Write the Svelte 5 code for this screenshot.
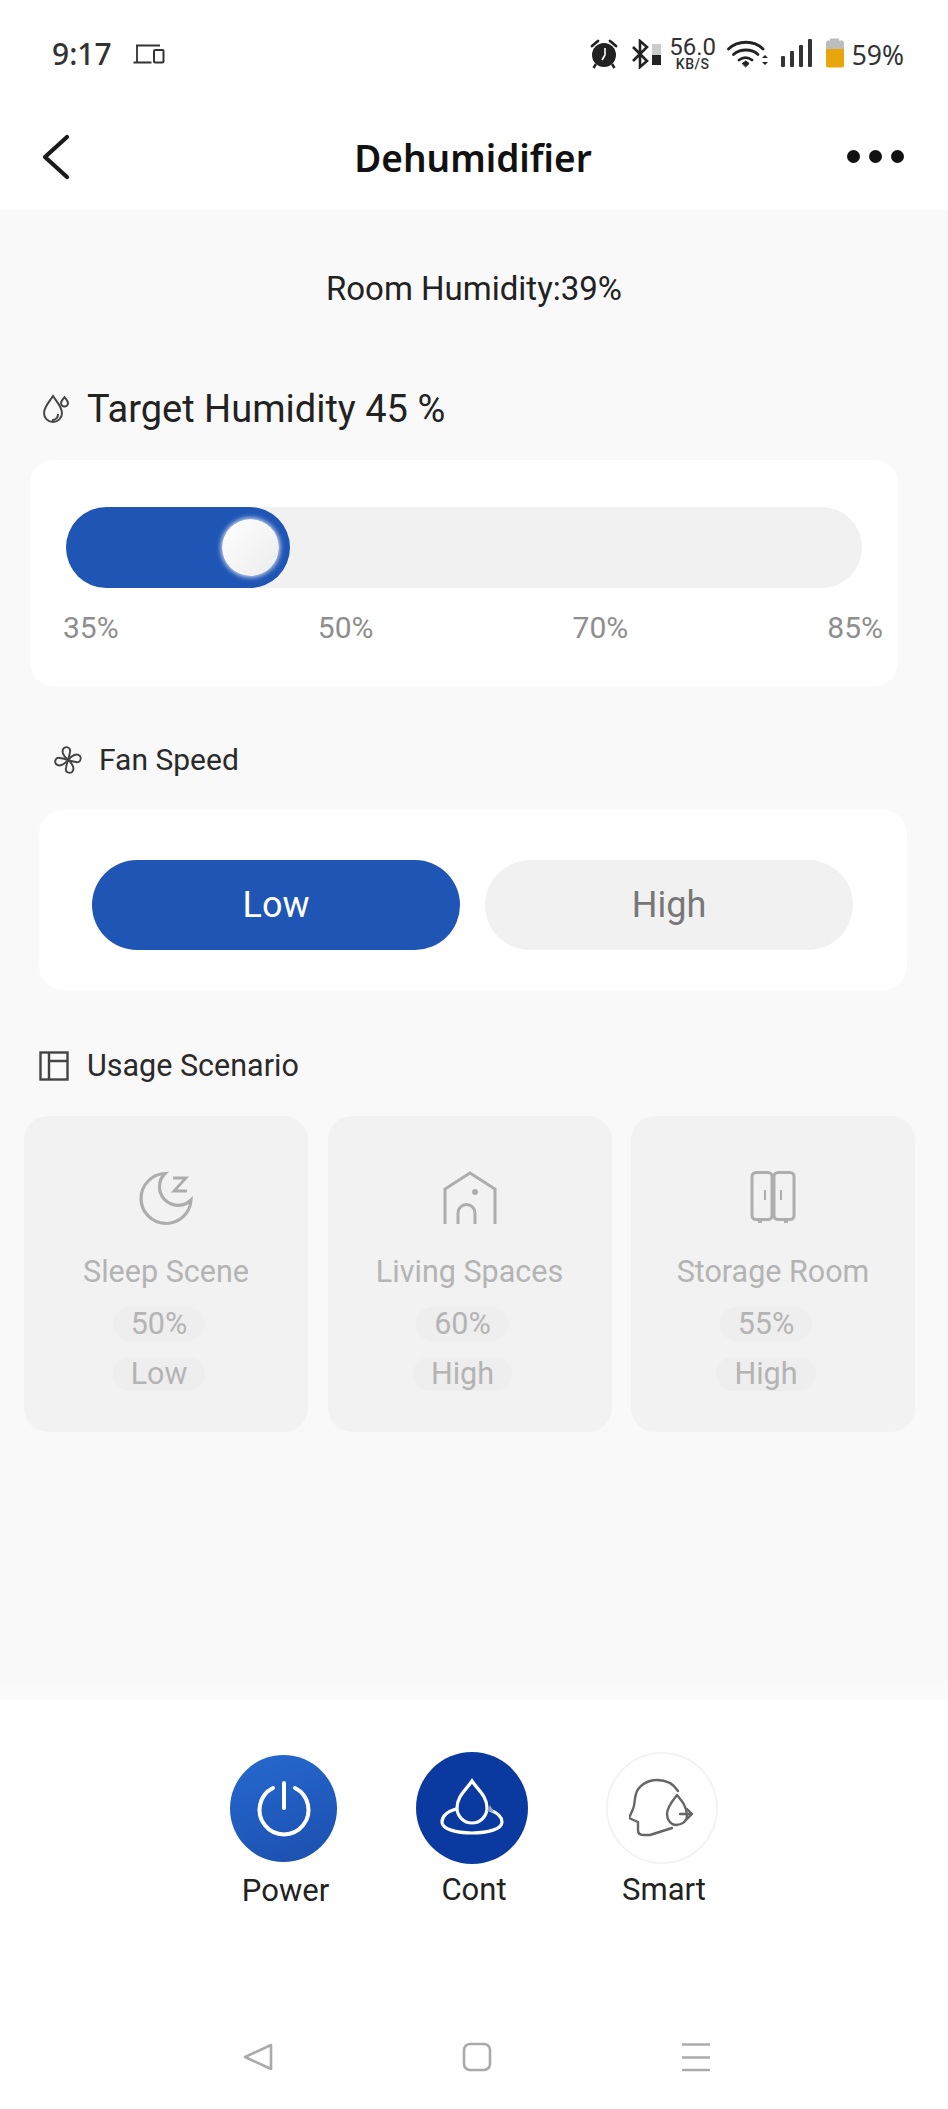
<script>
  const scenes = [
    { name: 'Sleep Scene', pct: '50%', mode: 'Low', icon: 'moon' },
    { name: 'Living Spaces', pct: '60%', mode: 'High', icon: 'house' },
    { name: 'Storage Room', pct: '55%', mode: 'High', icon: 'closet' }
  ];
</script>

<div class="page">
  <header class="top">
    <div class="status">
      <span class="time">9:17</span>
      <svg class="devices" width="32" height="20" viewBox="0 0 32 20" fill="none" stroke="#333" stroke-width="1.8">
        <path d="M3 1.500h24M4 1.500v16M0.500 18.500h18" />
        <rect x="21" y="6" width="9.500" height="12.500" rx="1" stroke-width="2" />
      </svg>
      <div class="status-right">
        <svg class="alarm" width="30" height="30" viewBox="0 0 30 30">
          <circle cx="15" cy="16" r="12" fill="#222" />
          <path d="M3 7l6-5M27 7l-6-5" stroke="#222" stroke-width="2.800" stroke-linecap="round" />
          <path d="M7 25l-2.500 4M23 25l2.500 4" stroke="#222" stroke-width="2.400" />
          <path d="M16 9v7l-3 5" stroke="#fff" stroke-width="1.600" fill="none" />
        </svg>
        <svg class="bt" width="32" height="30" viewBox="0 0 32 30" fill="none">
          <path d="M2 8l14 14-7 6V2l7 6L2 22" stroke="#222" stroke-width="2.600" />
          <rect x="21" y="5" width="9" height="11" fill="#ccc" />
          <rect x="21" y="16" width="9" height="10" fill="#222" />
        </svg>
        <div class="speed"><b>56.0</b><i>KB/S</i></div>
        <svg class="wifi" width="41" height="29" viewBox="0 0 41 29" fill="none" stroke="#222" stroke-width="2.800" stroke-linecap="round">
          <path d="M1.500 10C11 1 27 1 36 10" />
          <path d="M6.500 15.500C13 9.500 25 9.500 31 15.500" />
          <path d="M12 21C16 18 21 18 25 21" />
          <path d="M15.500 24.500l3.300-2.600 3.300 2.600-3.300 3.200z" fill="#222" stroke-width="1" />
          <path d="M35 19l3-3 3 3zM35 23l3 3 3-3z" fill="#222" stroke="none" />
        </svg>
        <svg class="signal" width="32" height="30" viewBox="0 0 32 30" fill="#333">
          <rect x="1" y="18" width="4" height="11" rx="1" />
          <rect x="10" y="13" width="4" height="16" rx="1" />
          <rect x="19" y="7" width="4" height="22" rx="1" />
          <rect x="28" y="1" width="4" height="28" rx="1" />
        </svg>
        <svg class="batt" width="20" height="31" viewBox="0 0 20 31">
          <path d="M5 1.500h9v2h3a2 2 0 0 1 2 2v9H1v-9a2 2 0 0 1 2-2h2z" fill="#bdbdbd" />
          <path d="M1 12h18v16a2.500 2.500 0 0 1-2.500 2.500h-13A2.500 2.500 0 0 1 1 28z" fill="#e8a50c" />
        </svg>
        <span class="pct">59%</span>
      </div>
    </div>
    <div class="bar">
      <svg class="back" width="28" height="46" viewBox="0 0 28 46" fill="none" stroke="#1a1a1a" stroke-width="4.200" stroke-linecap="round" stroke-linejoin="round">
        <path d="M25 3L3 23l22 20" />
      </svg>
      <h1>Dehumidifier</h1>
      <div class="dots"><span></span><span></span><span></span></div>
    </div>
  </header>

  <main>
    <p class="room">Room Humidity:39%</p>

    <div class="target">
      <svg width="30" height="32" viewBox="0 0 30 32" fill="none" stroke="#444" stroke-width="2">
        <path d="M13 3c4 6 9 11 9 17a9 9 0 0 1-18 0c0-6 5-11 9-17z" />
        <path d="M18 21a5.500 5.500 0 0 1-6 6" />
        <path d="M24.500 4c2 2.500 3.500 4 3.500 6a3.300 3.300 0 0 1-7 0c0-2 1.500-3.500 3.500-6z" />
      </svg>
      <span>Target Humidity 45 %</span>
    </div>

    <section class="card slider">
      <div class="track">
        <div class="fill"><span class="knob"></span></div>
      </div>
      <div class="ticks"><span>35%</span><span>50%</span><span>70%</span><span>85%</span></div>
    </section>

    <div class="label fan">
      <svg width="30" height="28" viewBox="0 0 30 28" fill="none" stroke="#444" stroke-width="1.900" stroke-linejoin="round">
        <path d="M15 14C10 10 8 5 11 2c3-2 7 0 6 4-.5 3-1 5-2 8z" />
        <path d="M15 14C10 10 8 5 11 2c3-2 7 0 6 4-.5 3-1 5-2 8z" transform="rotate(90 15 14)" />
        <path d="M15 14C10 10 8 5 11 2c3-2 7 0 6 4-.5 3-1 5-2 8z" transform="rotate(180 15 14)" />
        <path d="M15 14C10 10 8 5 11 2c3-2 7 0 6 4-.5 3-1 5-2 8z" transform="rotate(270 15 14)" />
      </svg>
      <span>Fan Speed</span>
    </div>

    <section class="card speed-card">
      <button class="pill on">Low</button>
      <button class="pill">High</button>
    </section>

    <div class="label usage">
      <svg width="30" height="30" viewBox="0 0 30 30" fill="none" stroke="#444" stroke-width="2.400">
        <rect x="1.500" y="1.500" width="27" height="27" />
        <path d="M10 1.500v27M10 10h18.500" />
      </svg>
      <span>Usage Scenario</span>
    </div>

    <div class="scenes">
      {#each scenes as s}
        <article class="scene">
          <div class="ico">
            {#if s.icon === 'moon'}
              <svg width="56" height="56" viewBox="0 0 56 56" fill="none" stroke="#adadad" stroke-width="3.200">
                <path d="M27 3.500A25 25 0 1 0 53 30 16 16 0 0 1 27 3.500z" />
                <path d="M35 8h13L36 21h13" stroke-width="2.800" />
              </svg>
            {:else if s.icon === 'house'}
              <svg width="56" height="56" viewBox="0 0 56 56" fill="none" stroke="#adadad" stroke-width="3">
                <path d="M3 54V19L28 3l25 16v35" />
                <path d="M16 54V43a8.500 8.500 0 0 1 17 0v11" />
                <circle cx="33" cy="22" r="3" fill="#adadad" stroke="none" />
              </svg>
            {:else}
              <svg width="56" height="56" viewBox="0 0 56 56" fill="none" stroke="#adadad" stroke-width="3">
                <rect x="7" y="2.500" width="20" height="47" rx="4" />
                <rect x="29" y="2.500" width="20" height="47" rx="4" />
                <path d="M20 20v10M36 20v10" stroke-width="2" />
                <path d="M15 50v3M41 50v3" stroke-width="4" />
              </svg>
            {/if}
          </div>
          <h3>{s.name}</h3>
          <span class="chip">{s.pct}</span>
          <span class="chip">{s.mode}</span>
        </article>
      {/each}
    </div>
  </main>
  <div class="seam"></div>

  <footer>
    <div class="actions">
      <div class="act power">
        <div class="round">
          <svg width="62" height="62" viewBox="0 0 62 62" fill="none" stroke="#fff" stroke-width="4" stroke-linecap="round">
            <path d="M20 10a24.500 24.500 0 1 0 22 0" />
            <path d="M31 5v25" />
          </svg>
        </div>
        <span>Power</span>
      </div>
      <div class="act cont">
        <div class="round">
          <svg width="66" height="60" viewBox="0 0 66 60" fill="none" stroke="#fff" stroke-width="3.200">
            <path d="M33 3c6 9 15 15 15 27a15 15 0 0 1-30 0C18 18 27 12 33 3z" />
            <path d="M17 31C7 34 3 39 3 44c0 7 14 11 30 11s30-4 30-11c0-5-4-9-12-12" stroke-linecap="round" />
            <path d="M51 27l-3 6 7 1z" fill="#8fa0c8" stroke="none" />
          </svg>
        </div>
        <span>Cont</span>
      </div>
      <div class="act smart">
        <div class="round">
          <svg width="66" height="60" viewBox="0 0 66 60" fill="none" stroke="#666" stroke-width="2.400" stroke-linecap="round" stroke-linejoin="round">
            <path d="M49 13C44 5 36 2 28 2 18 2 9 8 7 16 5 22 6 27 4 31L0 40l9 4v8c0 3 2 5 5 5h7l22-7" />
            <path d="M48 17c4 5 10 11 10 21 0 5-5 9-11 9-5 0-9-5-9-11 0-7 6-14 10-19z" />
            <path d="M51 36h12M58 31l5 5-5 5" />
          </svg>
        </div>
        <span>Smart</span>
      </div>
    </div>
    <nav>
      <svg width="30" height="30" viewBox="0 0 30 30" fill="none" stroke="#aaa" stroke-width="2.600" stroke-linejoin="round">
        <path d="M28 3v24L2 15z" />
      </svg>
      <svg width="30" height="30" viewBox="0 0 30 30" fill="none" stroke="#aaa" stroke-width="2.600">
        <rect x="2" y="2" width="26" height="26" rx="6" />
      </svg>
      <svg width="30" height="30" viewBox="0 0 30 30" fill="none" stroke="#aaa" stroke-width="2.600">
        <path d="M1 2.500h28M1 15.500h28M1 28h28" />
      </svg>
    </nav>
  </footer>
</div>

<style>
  :global(body) { margin: 0; background: #fff; }
  .page {
    width: 948px;
    height: 2109px;
    display: flex;
    flex-direction: column;
    font-family: Roboto, "Noto Sans", sans-serif;
    color: #222;
    overflow: hidden;
  }
  .top { height: 210px; background: #fff; flex: none; }
  .status {
    height: 108px;
    box-sizing: border-box;
    padding: 36px 44px 0 52px;
    display: flex;
    align-items: flex-start;
  }
  .time { font: 500 30px/36px "Noto Sans", sans-serif; color: #333; width: 81px; }
  .devices { margin-top: 8px; }
  .status-right { margin-left: auto; display: flex; align-items: flex-start; height: 36px; }
  .alarm { margin-top: 3px; }
  .bt { margin: 3px 0 0 12px; }
  .speed { margin: 0 0 0 6px; width: 48px; display: flex; flex-direction: column; align-items: center; color: #333; }
  .speed b { font: 400 24px/23px Roboto, sans-serif; }
  .speed i { font: 500 14px/11px Roboto, sans-serif; font-style: normal; letter-spacing: 0.500px; }
  .wifi { margin: 3px 0 0 10px; }
  .signal { margin: 2px 0 0 12px; }
  .batt { margin: 1px 0 0 13px; }
  .pct { font: 400 26.500px/36px "Noto Sans", sans-serif; color: #333; margin: 1px 0 0 7px; }

  .bar {
    height: 102px;
    position: relative;
    display: flex;
    align-items: center;
    justify-content: center;
  }
  .back { position: absolute; left: 42px; top: 26px; }
  h1 { margin: 0; font: 600 37px/46px "Noto Sans", sans-serif; color: #111; position: relative; top: -1px; left: -1px; }
  .dots { position: absolute; left: 847px; top: 42px; display: flex; gap: 9px; }
  .dots span { width: 13px; height: 13px; border-radius: 50%; background: #111; }

  main { height: 1475px; background: #f9f9f9; flex: none; display: flex; flex-direction: column; }
  .seam { height: 15px; background: #fbfbfb; flex: none; }
  .room { margin: 60px 0 0; text-align: center; font-size: 33px; line-height: 38px; color: #222; }
  .target { display: flex; align-items: center; margin: 80px 0 0 40px; height: 42px; font-size: 38px; color: #222; gap: 17px; }
  .card { background: #fff; border-radius: 24px; box-sizing: border-box; }
  .slider { margin: 30px 0 0 30px; width: 868px; height: 226px; padding: 47px 36px 0; position: relative; }
  .track { height: 81px; background: #f1f1f1; border-radius: 41px; }
  .fill { width: 224px; height: 81px; border-radius: 41px; background: #1f55b5; position: relative; }
  .knob {
    position: absolute; left: 156px; top: 12px; width: 57px; height: 57px; border-radius: 50%;
    background: linear-gradient(135deg, #fff, #ececec);
    box-shadow: 0 0 5px 1px rgba(255,255,255,.85);
  }
  .ticks { display: flex; justify-content: space-between; margin: 23px -21px 0 -3px; font-size: 30px; line-height: 34px; color: #8e8e8e; }
  .label { display: flex; align-items: center; font-size: 30px; line-height: 36px; color: #2a2a2a; }
  .fan { margin: 56px 0 0 53px; gap: 16px; }
  .speed-card { margin: 32px 0 0 39px; width: 868px; height: 180px; padding: 50px 54px 0 53px; display: flex; gap: 25px; }
  .pill {
    width: 368px; height: 90px; border: 0; border-radius: 45px; background: #f1f1f1; color: #777;
    font: 400 36px Roboto, sans-serif; padding: 0;
  }
  .pill.on { background: #1f55b5; color: #fff; }
  .usage { margin: 58px 0 0 39px; gap: 18px; font-size: 30.500px; }
  .scenes { margin: 32px 0 0 24px; display: flex; gap: 19.500px; }
  .scene {
    width: 284px; height: 316px; background: #f2f2f2; border-radius: 24px;
    display: flex; flex-direction: column; align-items: center; color: #b4b4b4;
  }
  .ico { margin-top: 54px; height: 56px; display: flex; }
  h3 { margin: 28px 0 0; font: 400 30.500px/36px Roboto, sans-serif; }
  .chip {
    margin-top: 17px; padding: 0 18px; height: 34px; line-height: 34px; border-radius: 17px; background: #eeeeee;
    font-size: 30.500px; position: relative; left: -7px;
  }
  .chip + .chip { margin-top: 16px; }

  footer { flex: 1; background: #fff; display: flex; flex-direction: column; }
  .actions { height: 342px; position: relative; display: flex; }
  .act { position: absolute; display: flex; flex-direction: column; align-items: center; font-size: 31px; line-height: 36px; color: #222; }
  .act span { position: relative; left: 2px; }
  .round { border-radius: 50%; display: flex; align-items: center; justify-content: center; box-sizing: border-box; }
  .power { left: 230px; top: 55px; width: 107px; }
  .power .round { width: 107px; height: 107px; background: linear-gradient(160deg, #2669cf, #1b4fae); margin-bottom: 11px; }
  .cont { left: 416px; top: 52px; width: 112px; }
  .cont .round { width: 112px; height: 112px; background: #0a399f; margin-bottom: 8px; }
  .smart { left: 606px; top: 52px; width: 112px; }
  .smart .round { width: 112px; height: 112px; border: 2px solid #f3f3f3; margin-bottom: 8px; }
  nav { display: flex; padding-left: 243px; gap: 189px; }
</style>
